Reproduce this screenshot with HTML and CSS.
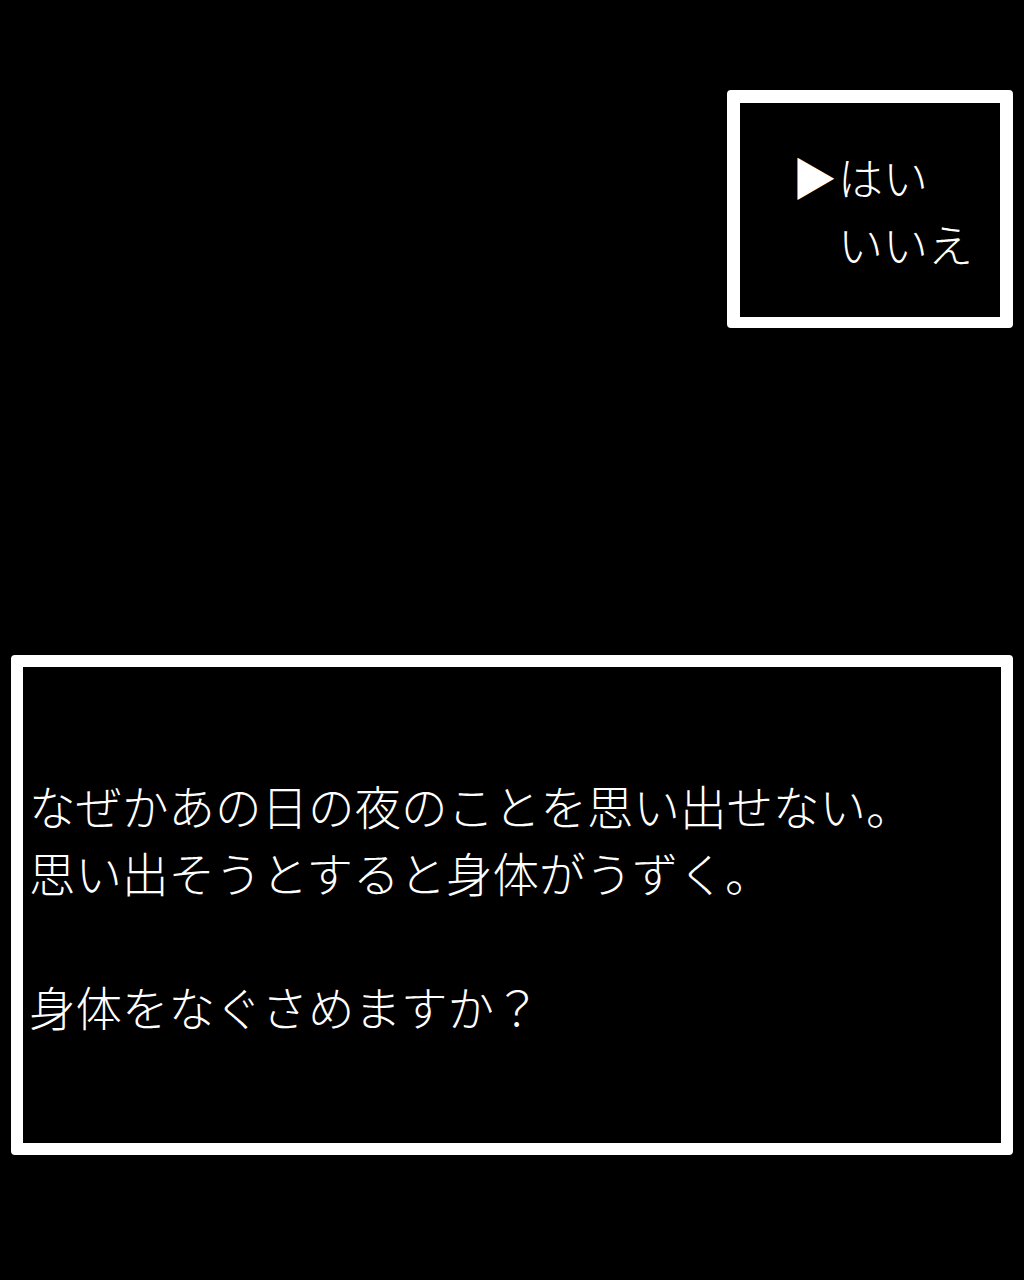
FILE: index.html
```html
<!DOCTYPE html>
<html lang="ja">
<head>
    <meta charset="UTF-8">
    <meta name="viewport" content="width=device-width, initial-scale=1.0">
    <title>メッセージ</title>
    <link rel="stylesheet" href="styles.css">
</head>
<body>

<div class="screen">
    <div class="choice-row">
        <div class="window choice-window">
            <div class="choices">
                <div class="choice selected"><span class="cursor">▶</span>はい</div>
                <div class="choice"><span class="cursor"></span>いいえ</div>
            </div>
        </div>
    </div>

    <div class="window message-window">
        <div class="message">
            なぜかあの日の夜のことを思い出せない。<br>
            思い出そうとすると身体がうずく。<br>
            <br>
            身体をなぐさめますか？
        </div>
    </div>
</div>

</body>
</html>
```

FILE: styles.css
```css
html, body {
    margin: 0;
    padding: 0;
    background-color: #000;
}

body {
    width: 1024px;
    height: 1280px;
    font-family: "Noto Sans CJK JP", "Noto Sans", sans-serif;
    font-weight: 300;
    color: #fff;
}

.screen {
    display: flex;
    flex-direction: column;
    padding: 90px 11px 0 11px;
}

.choice-row {
    display: flex;
    justify-content: flex-end;
}

.window {
    box-sizing: border-box;
    border: 12px solid #fff;
    border-radius: 4px;
    background-color: #000;
    display: flex;
    align-items: center;
}

.choice-window {
    width: 286px;
    height: 238px;
    border-width: 13px 13px 11px 13px;
    padding-left: 52px;
}

.choices {
    font-size: 45px;
    line-height: 67px;
}

.choice {
    display: flex;
    white-space: nowrap;
}

.cursor {
    display: inline-block;
    width: 46px;
}

.message-window {
    margin-top: 327px;
    width: 1002px;
    height: 500px;
    padding-left: 6px;
}

.message {
    font-size: 46.5px;
    line-height: 67px;
    white-space: nowrap;
}
```
